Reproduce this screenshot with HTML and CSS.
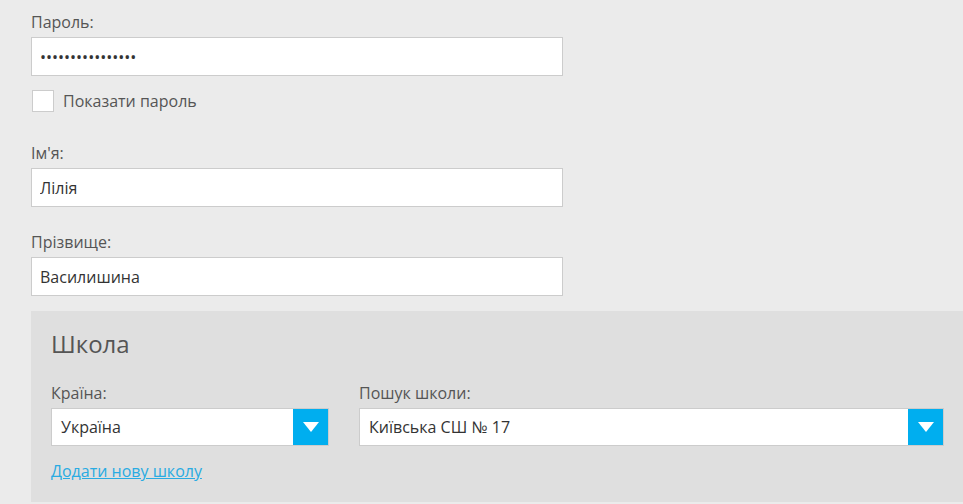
FILE: index.html
```html
<!DOCTYPE html>
<html lang="uk">
<head>
<meta charset="utf-8">
<title>Реєстрація</title>
<link rel="stylesheet" href="styles.css">
</head>
<body>
<div class="page">
  <div class="field field-password">
    <label class="label" for="pw">Пароль:</label>
    <input class="text-input" id="pw" type="password" value="1234567890123456">
    <label class="check-row">
      <span class="checkbox"></span>
      <span class="check-text">Показати пароль</span>
    </label>
  </div>

  <div class="field field-name">
    <label class="label" for="fname">Ім'я:</label>
    <input class="text-input" id="fname" type="text" value="Лілія">
  </div>

  <div class="field field-surname">
    <label class="label" for="lname">Прізвище:</label>
    <input class="text-input" id="lname" type="text" value="Василишина">
  </div>

  <section class="school">
    <h2 class="school-title">Школа</h2>
    <div class="school-grid">
      <div class="school-col">
        <div class="label">Країна:</div>
        <div class="select">
          <span class="select-value">Україна</span>
          <span class="select-btn"><span class="arrow"></span></span>
        </div>
      </div>
      <div class="school-col">
        <div class="label">Пошук школи:</div>
        <div class="select">
          <span class="select-value">Київська СШ № 17</span>
          <span class="select-btn"><span class="arrow"></span></span>
        </div>
      </div>
    </div>
    <a class="add-link" href="#">Додати нову школу</a>
  </section>
</div>
</body>
</html>
```

FILE: styles.css
```css
html, body {
  margin: 0;
  padding: 0;
  overflow: hidden;
}
body {
  background: #ebebeb;
  font-family: "Open Sans", "Liberation Sans", sans-serif;
  font-size: 16px;
  color: #555;
}
.page {
  padding: 12px 0 0 31px;
  width: 933px;
}
.field {
  display: flex;
  flex-direction: column;
  align-items: flex-start;
}
.label {
  display: block;
  font-size: 16px;
  line-height: 20px;
  height: 20px;
  margin-bottom: 5px;
  color: #555;
}
.text-input {
  box-sizing: border-box;
  width: 532px;
  height: 39px;
  margin: 0;
  padding: 0 8px;
  border: 1px solid #cccccc;
  background: #fff;
  font-family: "Open Sans", "Liberation Sans", sans-serif;
  font-size: 16px;
  color: #333;
  outline: none;
}
.check-row {
  display: flex;
  align-items: center;
  gap: 9px;
  margin: 14px 0 0 1px;
  height: 22px;
  color: #555;
}
.checkbox {
  box-sizing: border-box;
  width: 22px;
  height: 22px;
  background: #fff;
  border: 1px solid #cccccc;
}
.check-text {
  font-size: 16px;
  line-height: 20px;
}
.field-name {
  margin-top: 31px;
}
.field-surname {
  margin-top: 25px;
}
.school {
  margin-top: 15px;
  background: #dfdfdf;
  padding: 17px 20px 20px 20px;
}
.school-title {
  margin: 0 0 23px 0;
  font-size: 24px;
  line-height: 32px;
  font-weight: normal;
  color: #555;
}
.school-grid {
  display: grid;
  grid-template-columns: 278px 1fr;
  column-gap: 30px;
}
.select {
  box-sizing: border-box;
  height: 38px;
  border: 1px solid #cccccc;
  background: #fff;
  display: flex;
  align-items: stretch;
}
.select-value {
  flex: 1;
  display: flex;
  align-items: center;
  padding-left: 9px;
  font-size: 16px;
  color: #333;
}
.select-btn {
  width: 35px;
  background: #00aeef;
  display: flex;
  align-items: center;
  justify-content: center;
}
.arrow {
  width: 0;
  height: 0;
  border-left: 8.5px solid transparent;
  border-right: 8.5px solid transparent;
  border-top: 10px solid #fff;
}
.add-link {
  display: inline-block;
  margin-top: 15px;
  font-size: 16px;
  line-height: 20px;
  color: #29abe2;
  text-decoration: underline;
}
```
